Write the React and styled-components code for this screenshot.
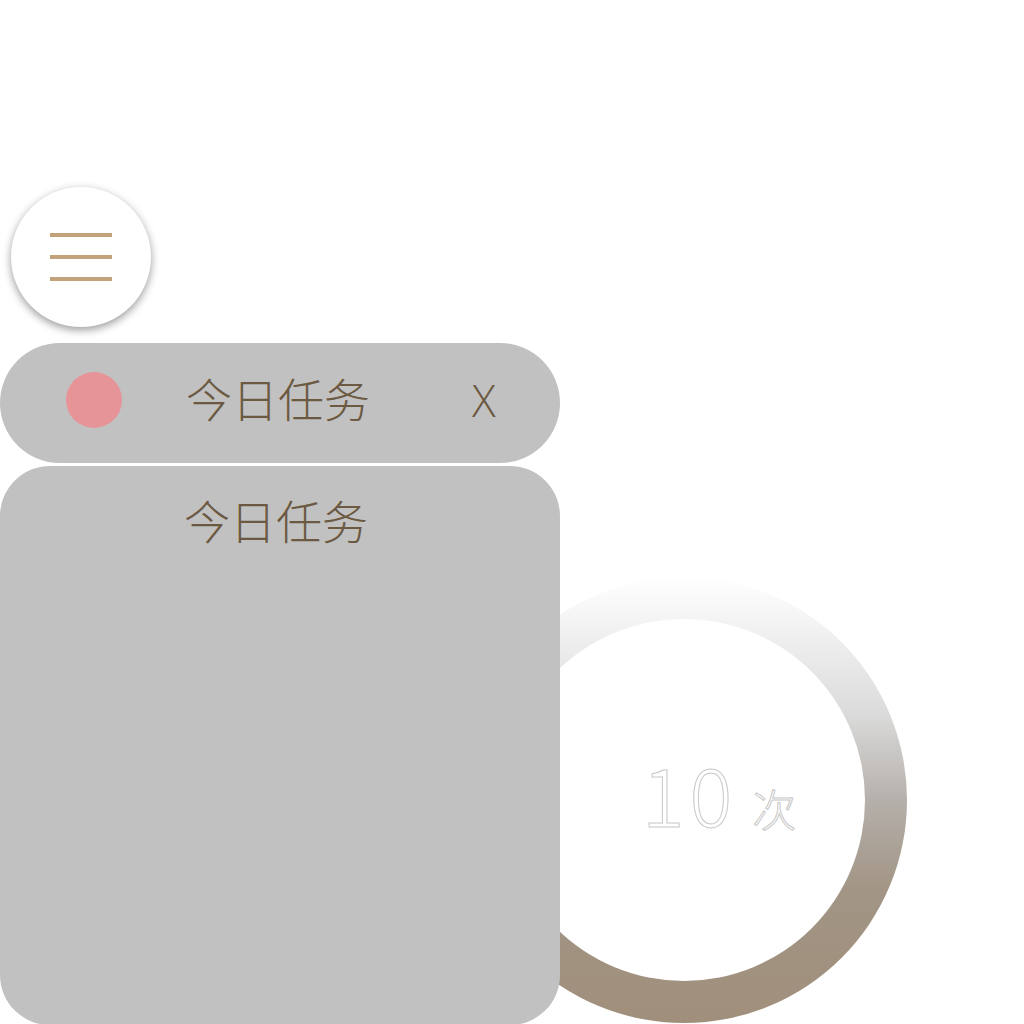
import React from "react";
import styled, { createGlobalStyle } from "styled-components";

const Global = createGlobalStyle`
  html, body {
    margin: 0;
    padding: 0;
    background: #fff;
    overflow: hidden;
  }
  body {
    font-family: "Noto Sans CJK SC", "Noto Sans", sans-serif;
  }
`;

const Page = styled.div`
  position: relative;
  width: 1024px;
  height: 1024px;
  padding-top: 187px;
  box-sizing: border-box;
`;

const Ring = styled.div`
  position: absolute;
  left: 461px;
  top: 577px;
  width: 446px;
  height: 446px;
  border-radius: 50%;
  background: linear-gradient(180deg, #ffffff 0%, #dcdcdc 30%, #b5b0ab 50%, #a29585 70%, #a08f7b 100%);
  display: flex;
  align-items: center;
  justify-content: center;
`;

const RingInner = styled.div`
  width: 362px;
  height: 362px;
  border-radius: 50%;
  background: #fff;
  display: flex;
  align-items: center;
  justify-content: center;
  padding-left: 70px;
  box-sizing: border-box;
`;

const Reading = styled.div`
  display: flex;
  align-items: baseline;
  line-height: 1;
  margin-bottom: 16px;
`;

const Count = styled.span`
  font-family: "Noto Sans CJK SC", "Noto Sans", sans-serif;
  font-weight: 300;
  font-size: 80px;
  letter-spacing: 5px;
  color: #fff;
  -webkit-text-stroke: 1px #c8c8c8;
  margin-right: 15px;
`;

const Unit = styled.span`
  font-family: "Noto Sans CJK SC", sans-serif;
  font-weight: 300;
  font-size: 44px;
  color: #fff;
  -webkit-text-stroke: 1px #c8c8c8;
`;

const MenuButton = styled.button`
  margin-left: 11px;
  width: 140px;
  height: 140px;
  border-radius: 50%;
  border: none;
  background: #fff;
  box-shadow: 0 3px 8px rgba(0, 0, 0, 0.4);
  display: flex;
  flex-direction: column;
  align-items: center;
  justify-content: center;
  gap: 18px;
  padding: 0;
`;

const MenuLine = styled.span`
  display: block;
  width: 62px;
  height: 4px;
  background: #c1a27b;
`;

const Column = styled.div`
  position: relative;
  width: 560px;
  margin-top: 16px;
  display: flex;
  flex-direction: column;
  gap: 3px;
`;

const Header = styled.div`
  height: 120px;
  border-radius: 60px;
  background: #c1c1c1;
  display: grid;
  grid-template-columns: 186px 1fr 88px;
  align-items: center;
  padding-bottom: 6px;
  box-sizing: border-box;
`;

const Dot = styled.span`
  justify-self: start;
  margin-left: 66px;
  width: 56px;
  height: 56px;
  border-radius: 50%;
  background: #e79499;
`;

const Title = styled.span`
  font-family: "Noto Sans CJK SC", sans-serif;
  font-weight: 300;
  font-size: 46px;
  color: #6c5942;
  line-height: 1;
`;

const HeaderTitle = styled(Title)`
  margin-top: -6px;
`;

const Close = styled.span`
  font-family: "Open Sans", "Noto Sans", sans-serif;
  font-weight: 300;
  font-size: 44px;
  color: #6c5942;
  line-height: 1;
`;

const Panel = styled.div`
  height: 559px;
  border-radius: 50px;
  background: #c1c1c1;
  display: flex;
  flex-direction: column;
  align-items: center;
  padding-top: 30px;
  box-sizing: border-box;
`;

const PanelTitle = styled(Title)`
  margin-left: -8px;
`;

export default function App() {
  return (
    <>
      <Global />
      <Page>
        <Ring>
          <RingInner>
            <Reading>
              <Count>10</Count>
              <Unit>次</Unit>
            </Reading>
          </RingInner>
        </Ring>
        <MenuButton>
          <MenuLine />
          <MenuLine />
          <MenuLine />
        </MenuButton>
        <Column>
          <Header>
            <Dot />
            <HeaderTitle>今日任务</HeaderTitle>
            <Close>X</Close>
          </Header>
          <Panel>
            <PanelTitle>今日任务</PanelTitle>
          </Panel>
        </Column>
      </Page>
    </>
  );
}
